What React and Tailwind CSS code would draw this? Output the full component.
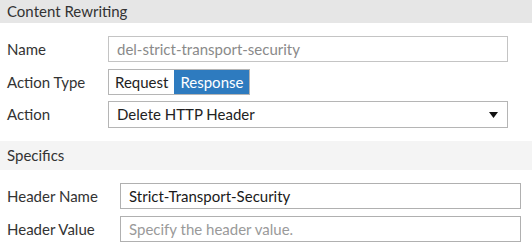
import { useState } from 'react';

// Content rewriting form: section header, labelled fields, specifics section
function Section({ title, tone, children }) {
  return (
    <div>
      <div className={`flex items-center px-[7px] text-[15px] text-[#333] ${tone}`}>{title}</div>
      {children}
    </div>
  );
}

function Row({ label, labelWidth, className = '', children }) {
  return (
    <div className={`flex items-center ${className}`}>
      <div className={`shrink-0 pl-[7px] text-[15px] text-[#333] ${labelWidth}`}>{label}</div>
      {children}
    </div>
  );
}

export default function App() {
  const [actionType, setActionType] = useState('response');

  return (
    <div className="w-[532px] h-[250px] bg-white overflow-hidden" style={{ fontFamily: 'Lato, "Open Sans", sans-serif' }}>
      <Section title="Content Rewriting" tone="h-[23px] bg-[#e6e6e6]">
        <Row label="Name" labelWidth="w-[108px]" className="mt-[13px]">
          <div className="w-[400px] h-[26px] border border-[#c4c4c4] flex items-center px-[8px] text-[15px] text-[#8a8a8a]">
            del-strict-transport-security
          </div>
        </Row>
        <Row label="Action Type" labelWidth="w-[108px]" className="mt-[7px]">
          <div className="flex h-[26px] border border-[#b5b5b5] text-[15px]">
            <button
              className={`px-[6px] ${actionType === 'request' ? 'bg-[#2e7bbf] text-white' : 'bg-white text-[#222]'}`}
              onClick={() => setActionType('request')}
            >
              Request
            </button>
            <button
              className={`px-[6px] ${actionType === 'response' ? 'bg-[#2e7bbf] text-white' : 'bg-white text-[#222]'}`}
              onClick={() => setActionType('response')}
            >
              Response
            </button>
          </div>
        </Row>
        <Row label="Action" labelWidth="w-[108px]" className="mt-[6px]">
          <div className="w-[400px] h-[27px] border border-[#b5b5b5] flex items-center justify-between pl-[8px] pr-[9px] text-[15px] text-[#222]">
            <span>Delete HTTP Header</span>
            <svg width="9" height="6" viewBox="0 0 9 6">
              <path d="M0 0 H9 L4.5 6 Z" fill="#111" />
            </svg>
          </div>
        </Row>
      </Section>
      <div className="mt-[13px]">
        <Section title="Specifics" tone="h-[29px] bg-[#f4f4f4]">
          <Row label="Header Name" labelWidth="w-[120px]" className="mt-[13px]">
            <div className="w-[401px] h-[26px] border border-[#b0b0b0] flex items-center px-[8px] text-[15px] text-[#1a1a1a]">
              Strict-Transport-Security
            </div>
          </Row>
          <Row label="Header Value" labelWidth="w-[120px]" className="mt-[7px]">
            <div className="w-[401px] h-[26px] border border-[#b0b0b0] flex items-center px-[8px] text-[15px] text-[#9a9a9a]">
              Specify the header value.
            </div>
          </Row>
        </Section>
      </div>
    </div>
  );
}
